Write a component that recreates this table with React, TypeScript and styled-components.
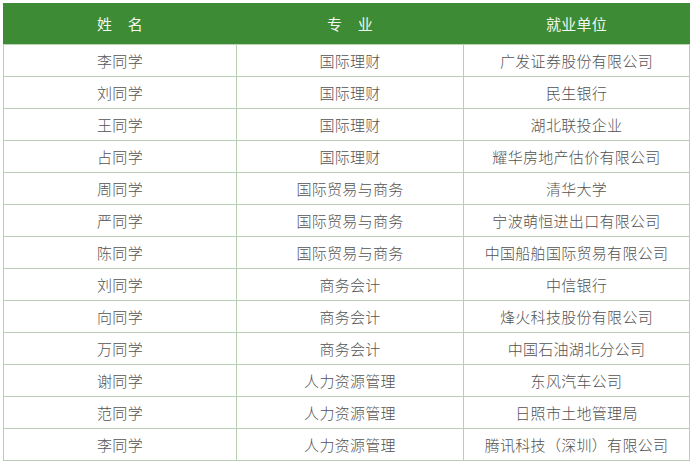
import React from "react";
import styled, { createGlobalStyle } from "styled-components";

const Global = createGlobalStyle`
  html, body { margin: 0; padding: 0; background: #ffffff; }
  body { font-family: "Noto Sans CJK SC", "Noto Sans", sans-serif; }
`;

const Page = styled.div`
  padding: 3px 0 0 3px;
`;

const Table = styled.table`
  width: 686px;
  border-collapse: collapse;
  table-layout: fixed;
`;

const HeadCell = styled.th`
  height: 41px;
  padding: 0;
  background: #3d8c35;
  color: #f2f7ef;
  font-size: 15px;
  font-weight: 400;
  text-align: center;
  letter-spacing: 0.3px;
  border-left: 1px solid #3d8c35;
  border-right: 1px solid #3d8c35;
  border-bottom: 1px solid #b9d3b3;
`;

const Cell = styled.td`
  height: 31px;
  padding: 0;
  color: #535353;
  font-size: 15px;
  font-weight: 300;
  text-align: center;
  border: 1px solid #b7d0b1;
  letter-spacing: 0.3px;
`;

const rows: [string, string, string][] = [
  ["李同学", "国际理财", "广发证券股份有限公司"],
  ["刘同学", "国际理财", "民生银行"],
  ["王同学", "国际理财", "湖北联投企业"],
  ["占同学", "国际理财", "耀华房地产估价有限公司"],
  ["周同学", "国际贸易与商务", "清华大学"],
  ["严同学", "国际贸易与商务", "宁波萌恒进出口有限公司"],
  ["陈同学", "国际贸易与商务", "中国船舶国际贸易有限公司"],
  ["刘同学", "商务会计", "中信银行"],
  ["向同学", "商务会计", "烽火科技股份有限公司"],
  ["万同学", "商务会计", "中国石油湖北分公司"],
  ["谢同学", "人力资源管理", "东风汽车公司"],
  ["范同学", "人力资源管理", "日照市土地管理局"],
  ["李同学", "人力资源管理", "腾讯科技（深圳）有限公司"],
];

export default function App() {
  return (
    <Page>
      <Global />
      <Table>
        <colgroup>
          <col style={{ width: 233 }} />
          <col style={{ width: 227 }} />
          <col style={{ width: 226 }} />
        </colgroup>
        <thead>
          <tr>
            <HeadCell>姓　名</HeadCell>
            <HeadCell>专　业</HeadCell>
            <HeadCell>就业单位</HeadCell>
          </tr>
        </thead>
        <tbody>
          {rows.map((r, i) => (
            <tr key={i}>
              <Cell>{r[0]}</Cell>
              <Cell>{r[1]}</Cell>
              <Cell>{r[2]}</Cell>
            </tr>
          ))}
        </tbody>
      </Table>
    </Page>
  );
}
